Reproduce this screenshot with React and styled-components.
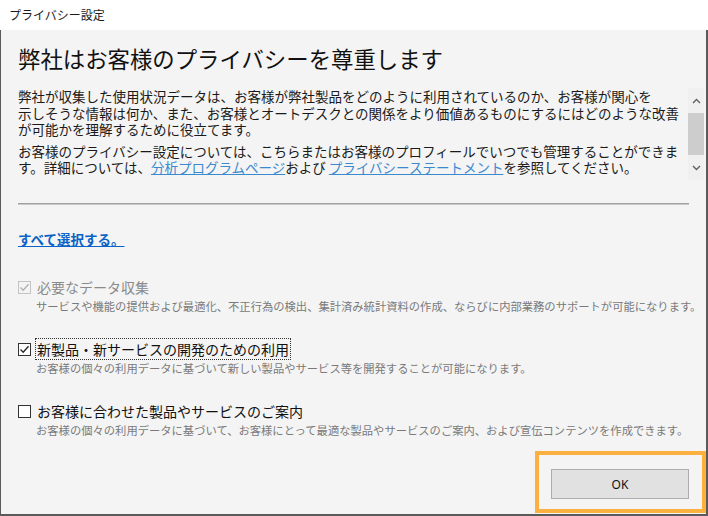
import React from 'react'
import styled, { createGlobalStyle } from 'styled-components'

const GlobalStyle = createGlobalStyle`
    html, body {
        margin: 0;
        padding: 0;
        background: #ffffff;
    }
    body {
        font-family: "Noto Sans CJK JP", "Noto Sans", sans-serif;
    }
`

const options = [
    {
        label: '必要なデータ収集',
        desc: 'サービスや機能の提供および最適化、不正行為の検出、集計済み統計資料の作成、ならびに内部業務のサポートが可能になります。',
        checked: true,
        disabled: true,
    },
    {
        label: '新製品・新サービスの開発のための利用',
        desc: 'お客様の個々の利用データに基づいて新しい製品やサービス等を開発することが可能になります。',
        checked: true,
        focused: true,
    },
    {
        label: 'お客様に合わせた製品やサービスのご案内',
        desc: 'お客様の個々の利用データに基づいて、お客様にとって最適な製品やサービスのご案内、および宣伝コンテンツを作成できます。',
        checked: false,
    },
]

const CheckBox = ({ checked, disabled }) => (
    <Box $disabled={disabled}>
        {checked && (
            <svg width="11" height="11" viewBox="0 0 11 11">
                <path d="M1.5 5.5 L4.2 8.2 L9.5 2.2" fill="none"
                    stroke={disabled ? '#b0b0b0' : '#222'} strokeWidth="1.3" />
            </svg>
        )}
    </Box>
)

const App = () => {
    return (
        <>
            <GlobalStyle />
            <Window>
                <TitleBar>プライバシー設定</TitleBar>
                <Body>
                    <Heading>弊社はお客様のプライバシーを尊重します</Heading>
                    <TextBox>
                        <TextContent>
                            <Para>
                                <Line>弊社が収集した使用状況データは、お客様が弊社製品をどのように利用されているのか、お客様が関心を</Line>
                                <Line>示しそうな情報は何か、また、お客様とオートデスクとの関係をより価値あるものにするにはどのような改善</Line>
                                <Line>が可能かを理解するために役立てます。</Line>
                            </Para>
                            <Para>
                                <Line>お客様のプライバシー設定については、こちらまたはお客様のプロフィールでいつでも管理することができま</Line>
                                <Line>す。詳細については、<TextLink href="#">分析プログラムページ</TextLink>および <TextLink href="#">プライバシーステートメント</TextLink>を参照してください。</Line>
                            </Para>
                        </TextContent>
                        <ScrollBar>
                            <Arrow>
                                <svg width="9" height="6" viewBox="0 0 9 6">
                                    <path d="M1 5 L4.5 1.5 L8 5" fill="none" stroke="#606060" strokeWidth="1.4" />
                                </svg>
                            </Arrow>
                            <Track>
                                <Thumb />
                            </Track>
                            <Arrow>
                                <svg width="9" height="6" viewBox="0 0 9 6">
                                    <path d="M1 1 L4.5 4.5 L8 1" fill="none" stroke="#606060" strokeWidth="1.4" />
                                </svg>
                            </Arrow>
                        </ScrollBar>
                    </TextBox>
                    <Separator />
                    <SelectAll href="#">すべて選択する。</SelectAll>
                    <OptionList>
                        {options.map(opt => (
                            <Option key={opt.label}>
                                <OptionRow>
                                    <CheckBox checked={opt.checked} disabled={opt.disabled} />
                                    <OptionLabel $disabled={opt.disabled} $focused={opt.focused}>
                                        {opt.label}
                                    </OptionLabel>
                                </OptionRow>
                                <OptionDesc>{opt.desc}</OptionDesc>
                            </Option>
                        ))}
                    </OptionList>
                    <Footer>
                        <Highlight>
                            <OkButton>OK</OkButton>
                        </Highlight>
                    </Footer>
                </Body>
            </Window>
        </>
    )
}

export default App

const Window = styled.div`
    width: 708px;
    height: 516px;
    display: flex;
    flex-direction: column;
    box-sizing: border-box;
`

const TitleBar = styled.div`
    height: 30px;
    flex: none;
    background: #ffffff;
    font-size: 12px;
    color: #1a1a1a;
    line-height: 30px;
    padding-left: 9px;
`

const Body = styled.div`
    flex: 1;
    display: flex;
    flex-direction: column;
    background: #f4f4f4;
    border-left: 1px solid #5a5a5a;
    border-right: 2px solid #5a5a5a;
    border-bottom: 2px solid #5a5a5a;
    padding: 13px 0 0 17px;
    min-height: 0;
`

const Heading = styled.h1`
    margin: 0;
    font-size: 22.4px;
    line-height: 30px;
    font-weight: 400;
    color: #111;
`

const TextBox = styled.div`
    margin-top: 15px;
    height: 92px;
    display: flex;
`

const TextContent = styled.div`
    flex: 1;
    font-size: 13.5px;
    color: #1a1a1a;
    white-space: nowrap;
`

const Para = styled.div`
    margin: 0 0 5px 0;
`

const Line = styled.div`
    height: 16.5px;
    line-height: 16.5px;
`

const TextLink = styled.a`
    color: #3b8ad0;
    text-decoration: underline;
`

const ScrollBar = styled.div`
    width: 16px;
    margin-right: 2px;
    display: flex;
    flex-direction: column;
    background: #f0f0f0;
    padding: 4px 0;
`

const Arrow = styled.div`
    height: 17px;
    display: flex;
    align-items: center;
    justify-content: center;
`

const Track = styled.div`
    flex: 1;
    display: flex;
    flex-direction: column;
    padding: 4px 0;
`

const Thumb = styled.div`
    flex: 1;
    background: #cdcdcd;
`

const Separator = styled.div`
    margin-top: 23px;
    width: 671px;
    height: 1px;
    background: #a0a0a0;
    border-bottom: 1px solid #c8c8c8;
`

const SelectAll = styled.a`
    align-self: flex-start;
    margin-top: 24px;
    font-size: 13.5px;
    line-height: 20px;
    font-weight: 700;
    color: #0a62c6;
    text-decoration: underline;
`

const OptionList = styled.div`
    margin-top: 28px;
    display: flex;
    flex-direction: column;
    gap: 25px;
`

const Option = styled.div`
    display: flex;
    flex-direction: column;
`

const OptionRow = styled.div`
    display: flex;
    align-items: center;
    gap: 5px;
`

const Box = styled.span`
    width: 11px;
    height: 11px;
    border: 1px solid ${p => (p.$disabled ? '#c4c4c4' : '#333')};
    background: ${p => (p.$disabled ? '#f4f4f4' : '#fff')};
    display: flex;
    align-items: center;
    justify-content: center;
`

const OptionLabel = styled.span`
    font-size: 14px;
    line-height: 20px;
    color: ${p => (p.$disabled ? '#8a8a8a' : '#111')};
    outline: ${p => (p.$focused ? '1px dotted #333' : 'none')};
    padding: 0 1px;
`

const OptionDesc = styled.div`
    margin-left: 18px;
    margin-top: 1px;
    font-size: 11.3px;
    line-height: 16px;
    color: #7a7a7a;
    white-space: nowrap;
`

const Footer = styled.div`
    margin-top: auto;
    display: flex;
    justify-content: flex-end;
    margin-bottom: 1px;
`

const Highlight = styled.div`
    border: 4px solid #fbb040;
    padding: 14px 13px 10px 12px;
`

const OkButton = styled.button`
    width: 138px;
    height: 30px;
    background: #e1e1e1;
    border: 1px solid #adadad;
    font-family: "Noto Sans", sans-serif;
    font-size: 12px;
    color: #111;
    padding: 0;
`
